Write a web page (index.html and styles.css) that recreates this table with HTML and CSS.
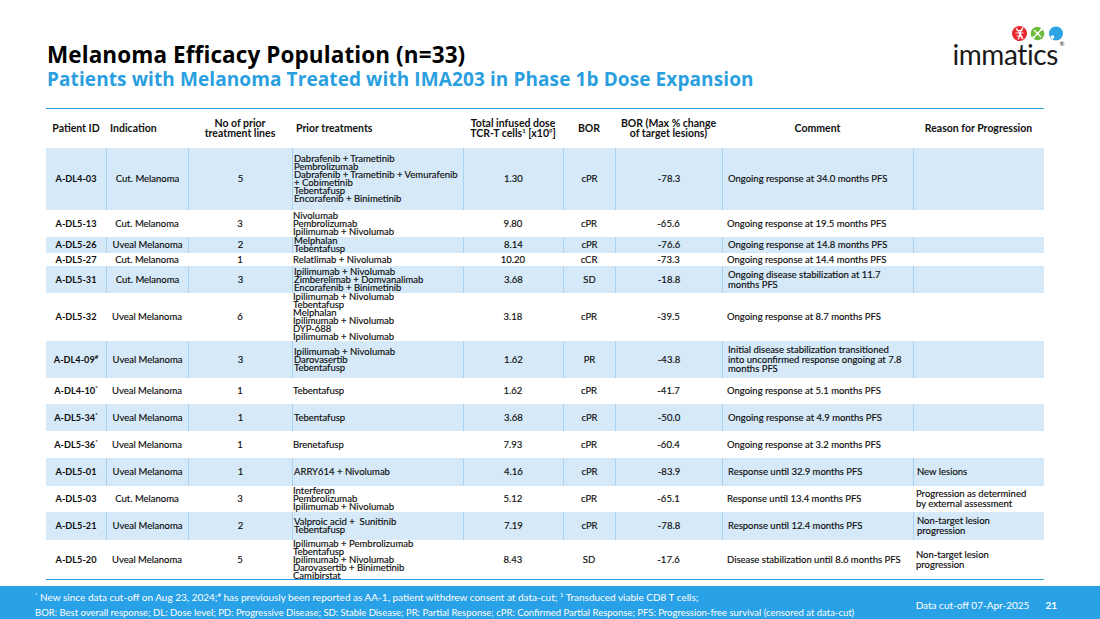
FILE: index.html
```html
<!DOCTYPE html>
<html>
<head>
<meta charset="utf-8">
<link rel="stylesheet" href="styles.css">
</head>
<body>
<div class="slide">
  <header class="top">
    <div class="titles">
      <h1 class="title">Melanoma Efficacy Population (n=33)</h1>
      <h2 class="subtitle">Patients with Melanoma Treated with IMA203 in Phase 1b Dose Expansion</h2>
    </div>
    <div class="logo">
      <svg class="dots" width="54" height="17" viewBox="0 0 54 17">
        <circle cx="7.5" cy="8.5" r="7.5" fill="#e8262d"/>
        <path d="M4 3.5 C8 6, 9 10, 6 14.5 M11 2.5 C8 6, 7 10, 11 14" stroke="#fff" stroke-width="1.3" fill="none"/>
        <path d="M3.5 8 L11.5 8 M4.5 11 L10.5 11 M4.5 5.5 L10.5 5.5" stroke="#fff" stroke-width="0.9" fill="none"/>
        <circle cx="25.5" cy="8.5" r="6.8" fill="#6dbb3b"/>
        <path d="M21.5 12.5 L29.5 4.5 M22 5 L29 12" stroke="#fff" stroke-width="1.2" fill="none"/>
        <circle cx="21.5" cy="12.5" r="1.3" fill="#fff"/>
        <circle cx="29.5" cy="4.5" r="1.3" fill="#fff"/>
        <circle cx="25.5" cy="8.5" r="1.4" fill="#fff"/>
        <circle cx="44" cy="8.5" r="7" fill="#2ba3e4"/>
        <circle cx="40.5" cy="12" r="1.8" fill="#fff"/>
      </svg>
      <div class="brand">immatics<span class="reg">®</span></div>
    </div>
  </header>

  <div class="table">
    <div class="row head">
      <div class="c"><span>Patient ID</span></div>
      <div class="c l"><span>Indication</span></div>
      <div class="c"><span>No of prior<br>treatment lines</span></div>
      <div class="c l"><span>Prior treatments</span></div>
      <div class="c"><span>Total infused dose<br>TCR-T cells<sup class="sup">1</sup> [x10<sup class="sup">9</sup>]</span></div>
      <div class="c"><span>BOR</span></div>
      <div class="c"><span>BOR (Max % change<br>of target lesions)</span></div>
      <div class="c"><span>Comment</span></div>
      <div class="c"><span>Reason for Progression</span></div>
    </div>

    <div class="row blue">
      <div class="c id"><span>A-DL4-03</span></div>
      <div class="c"><span>Cut. Melanoma</span></div>
      <div class="c"><span>5</span></div>
      <div class="c tx"><span>Dabrafenib + Trametinib<br>Pembrolizumab<br>Dabrafenib + Trametinib + Vemurafenib<br>+ Cobimetinib<br>Tebentafusp<br>Encorafenib + Binimetinib</span></div>
      <div class="c"><span>1.30</span></div>
      <div class="c"><span>cPR</span></div>
      <div class="c"><span>-78.3</span></div>
      <div class="c l"><span>Ongoing response at 34.0 months PFS</span></div>
      <div class="c r"></div>
    </div>

    <div class="row">
      <div class="c id"><span>A-DL5-13</span></div>
      <div class="c"><span>Cut. Melanoma</span></div>
      <div class="c"><span>3</span></div>
      <div class="c tx"><span>Nivolumab<br>Pembrolizumab<br>Ipilimumab + Nivolumab</span></div>
      <div class="c"><span>9.80</span></div>
      <div class="c"><span>cPR</span></div>
      <div class="c"><span>-65.6</span></div>
      <div class="c l"><span>Ongoing response at 19.5 months PFS</span></div>
      <div class="c r"></div>
    </div>

    <div class="row blue">
      <div class="c id"><span>A-DL5-26</span></div>
      <div class="c"><span>Uveal Melanoma</span></div>
      <div class="c"><span>2</span></div>
      <div class="c tx"><span>Melphalan<br>Tebentafusp</span></div>
      <div class="c"><span>8.14</span></div>
      <div class="c"><span>cPR</span></div>
      <div class="c"><span>-76.6</span></div>
      <div class="c l"><span>Ongoing response at 14.8 months PFS</span></div>
      <div class="c r"></div>
    </div>

    <div class="row">
      <div class="c id"><span>A-DL5-27</span></div>
      <div class="c"><span>Cut. Melanoma</span></div>
      <div class="c"><span>1</span></div>
      <div class="c tx"><span>Relatlimab + Nivolumab</span></div>
      <div class="c"><span>10.20</span></div>
      <div class="c"><span>cCR</span></div>
      <div class="c"><span>-73.3</span></div>
      <div class="c l"><span>Ongoing response at 14.4 months PFS</span></div>
      <div class="c r"></div>
    </div>

    <div class="row blue">
      <div class="c id"><span>A-DL5-31</span></div>
      <div class="c"><span>Cut. Melanoma</span></div>
      <div class="c"><span>3</span></div>
      <div class="c tx"><span>Ipilimumab + Nivolumab<br>Zimberelimab + Domvanalimab<br>Encorafenib + Binimetinib</span></div>
      <div class="c"><span>3.68</span></div>
      <div class="c"><span>SD</span></div>
      <div class="c"><span>-18.8</span></div>
      <div class="c l"><span>Ongoing disease stabilization at 11.7<br>months PFS</span></div>
      <div class="c r"></div>
    </div>

    <div class="row">
      <div class="c id"><span>A-DL5-32</span></div>
      <div class="c"><span>Uveal Melanoma</span></div>
      <div class="c"><span>6</span></div>
      <div class="c tx"><span>Ipilimumab + Nivolumab<br>Tebentafusp<br>Melphalan<br>Ipilimumab + Nivolumab<br>DYP-688<br>Ipilimumab + Nivolumab</span></div>
      <div class="c"><span>3.18</span></div>
      <div class="c"><span>cPR</span></div>
      <div class="c"><span>-39.5</span></div>
      <div class="c l"><span>Ongoing response at 8.7 months PFS</span></div>
      <div class="c r"></div>
    </div>

    <div class="row blue">
      <div class="c id"><span>A-DL4-09<sup class="sup">#</sup></span></div>
      <div class="c"><span>Uveal Melanoma</span></div>
      <div class="c"><span>3</span></div>
      <div class="c tx"><span>Ipilimumab + Nivolumab<br>Darovasertib<br>Tebentafusp</span></div>
      <div class="c"><span>1.62</span></div>
      <div class="c"><span>PR</span></div>
      <div class="c"><span>-43.8</span></div>
      <div class="c l"><span>Initial disease stabilization transitioned<br>into unconfirmed response ongoing at 7.8<br>months PFS</span></div>
      <div class="c r"></div>
    </div>

    <div class="row">
      <div class="c id"><span>A-DL4-10<sup class="sup">*</sup></span></div>
      <div class="c"><span>Uveal Melanoma</span></div>
      <div class="c"><span>1</span></div>
      <div class="c tx"><span>Tebentafusp</span></div>
      <div class="c"><span>1.62</span></div>
      <div class="c"><span>cPR</span></div>
      <div class="c"><span>-41.7</span></div>
      <div class="c l"><span>Ongoing response at 5.1 months PFS</span></div>
      <div class="c r"></div>
    </div>

    <div class="row blue">
      <div class="c id"><span>A-DL5-34<sup class="sup">*</sup></span></div>
      <div class="c"><span>Uveal Melanoma</span></div>
      <div class="c"><span>1</span></div>
      <div class="c tx"><span>Tebentafusp</span></div>
      <div class="c"><span>3.68</span></div>
      <div class="c"><span>cPR</span></div>
      <div class="c"><span>-50.0</span></div>
      <div class="c l"><span>Ongoing response at 4.9 months PFS</span></div>
      <div class="c r"></div>
    </div>

    <div class="row">
      <div class="c id"><span>A-DL5-36<sup class="sup">*</sup></span></div>
      <div class="c"><span>Uveal Melanoma</span></div>
      <div class="c"><span>1</span></div>
      <div class="c tx"><span>Brenetafusp</span></div>
      <div class="c"><span>7.93</span></div>
      <div class="c"><span>cPR</span></div>
      <div class="c"><span>-60.4</span></div>
      <div class="c l"><span>Ongoing response at 3.2 months PFS</span></div>
      <div class="c r"></div>
    </div>

    <div class="row blue">
      <div class="c id"><span>A-DL5-01</span></div>
      <div class="c"><span>Uveal Melanoma</span></div>
      <div class="c"><span>1</span></div>
      <div class="c tx"><span>ARRY614 + Nivolumab</span></div>
      <div class="c"><span>4.16</span></div>
      <div class="c"><span>cPR</span></div>
      <div class="c"><span>-83.9</span></div>
      <div class="c l"><span>Response until 32.9 months PFS</span></div>
      <div class="c r"><span>New lesions</span></div>
    </div>

    <div class="row">
      <div class="c id"><span>A-DL5-03</span></div>
      <div class="c"><span>Cut. Melanoma</span></div>
      <div class="c"><span>3</span></div>
      <div class="c tx"><span>Interferon<br>Pembrolizumab<br>Ipilimumab + Nivolumab</span></div>
      <div class="c"><span>5.12</span></div>
      <div class="c"><span>cPR</span></div>
      <div class="c"><span>-65.1</span></div>
      <div class="c l"><span>Response until 13.4 months PFS</span></div>
      <div class="c r"><span>Progression as determined<br>by external assessment</span></div>
    </div>

    <div class="row blue">
      <div class="c id"><span>A-DL5-21</span></div>
      <div class="c"><span>Uveal Melanoma</span></div>
      <div class="c"><span>2</span></div>
      <div class="c tx"><span>Valproic acid +&nbsp; Sunitinib<br>Tebentafusp</span></div>
      <div class="c"><span>7.19</span></div>
      <div class="c"><span>cPR</span></div>
      <div class="c"><span>-78.8</span></div>
      <div class="c l"><span>Response until 12.4 months PFS</span></div>
      <div class="c r"><span>Non-target lesion<br>progression</span></div>
    </div>

    <div class="row">
      <div class="c id"><span>A-DL5-20</span></div>
      <div class="c"><span>Uveal Melanoma</span></div>
      <div class="c"><span>5</span></div>
      <div class="c tx"><span>Ipilimumab + Pembrolizumab<br>Tebentafusp<br>Ipilimumab + Nivolumab<br>Darovasertib + Binimetinib<br>Camibirstat</span></div>
      <div class="c"><span>8.43</span></div>
      <div class="c"><span>SD</span></div>
      <div class="c"><span>-17.6</span></div>
      <div class="c l"><span>Disease stabilization until 8.6 months PFS</span></div>
      <div class="c r"><span>Non-target lesion<br>progression</span></div>
    </div>
  </div>

  <footer class="footer">
    <div class="notes">
      <p class="n1"><sup class="fsup">*</sup> New since data cut-off on Aug 23, 2024;<sup class="fsup">#</sup> has previously been reported as AA-1, patient withdrew consent at data-cut; <sup class="fsup">1</sup> Transduced viable CD8 T cells;</p>
      <p>BOR: Best overall response; DL: Dose level; PD: Progressive Disease; SD: Stable Disease; PR: Partial Response; cPR: Confirmed Partial Response; PFS: Progression-free survival (censored at data-cut)</p>
    </div>
    <div class="cut">Data cut-off 07-Apr-2025</div>
    <div class="page">21</div>
  </footer>
</div>
</body>
</html>
```
FILE: styles.css
```css
* { box-sizing: border-box; margin: 0; padding: 0; }

body {
  width: 1100px;
  height: 619px;
  overflow: hidden;
  background: #ffffff;
  font-family: Lato, "Liberation Sans", sans-serif;
  color: #0d0d0d;
}

.slide {
  width: 1100px;
  height: 619px;
  display: flex;
  flex-direction: column;
}

/* ---------- header ---------- */
.top {
  height: 108px;
  display: flex;
  justify-content: space-between;
  align-items: flex-start;
  padding: 25px 36px 0 47px;
}

.titles { margin-top: 17px; }

.title {
  font-family: "Open Sans", sans-serif;
  font-weight: 700;
  font-size: 22.5px;
  line-height: 25px;
  letter-spacing: 0.1px;
  color: #000;
}

.subtitle {
  font-family: "Open Sans", sans-serif;
  font-weight: 700;
  font-size: 19px;
  line-height: 24px;
  letter-spacing: 0.1px;
  color: #2a9fe0;
}

.logo {
  display: flex;
  flex-direction: column;
  align-items: flex-end;
  width: 116px;
}

.dots { display: block; margin-right: -2px; }

.brand {
  font-family: Lato, sans-serif;
  font-weight: 400;
  font-size: 28px;
  line-height: 24px;
  color: #1a1a1a;
  letter-spacing: -0.4px;
  position: relative;
  padding-right: 6px;
}

.reg {
  position: absolute;
  right: 0;
  top: -1px;
  font-size: 6px;
  line-height: 6px;
}

/* ---------- table ---------- */
.table {
  margin-left: 46px;
  width: 998px;
  border-top: 1px solid #2a9fe0;
  border-bottom: 1px solid #2a9fe0;
}

.row {
  display: grid;
  grid-template-columns: 60px 82px 104px 171px 100px 52px 107px 191px 131px;
  font-size: 9.5px;
  line-height: 9.5px;
  -webkit-text-stroke: 0.15px #0d0d0d;
}

.row.blue { background: #d5e9f8; }
.row.blue .c + .c { border-left: 1px solid #a9d2f0; }

.head {
  height: 39px;
  font-weight: 700;
  font-size: 10.5px;
  line-height: 9.5px;
  color: #111;
  -webkit-text-stroke: 0;
}

.row:nth-child(2)  { height: 62px; }
.row:nth-child(3)  { height: 27px; }
.row:nth-child(4)  { height: 16px; }
.row:nth-child(5)  { height: 13px; }
.row:nth-child(6)  { height: 27px; }
.row:nth-child(7)  { height: 48px; }
.row:nth-child(8)  { height: 37px; }
.row:nth-child(9)  { height: 26px; }
.row:nth-child(10) { height: 27px; }
.row:nth-child(11) { height: 27px; }
.row:nth-child(12) { height: 28px; }
.row:nth-child(13) { height: 26px; }
.row:nth-child(14) { height: 28px; }
.row:nth-child(15) { height: 39px; }

.c {
  display: flex;
  flex-direction: column;
  justify-content: center;
  align-items: center;
  text-align: center;
  white-space: nowrap;
  min-height: 0;
  overflow: visible;
}

.c.l { align-items: flex-start; text-align: left; padding-left: 5px; }
.c.r { align-items: flex-start; text-align: left; padding-left: 3px; line-height: 10px; }
.c.tx { align-items: flex-start; text-align: left; padding-left: 1px; line-height: 8px; }
.head .c.l { padding-left: 4px; }

.id { font-weight: 700; font-size: 9.2px; -webkit-text-stroke: 0; }

.sup {
  font-size: 6px;
  line-height: 0;
  vertical-align: 4px;
}

/* ---------- footer ---------- */
.footer {
  margin-top: auto;
  height: 33px;
  background: #29a1e6;
  color: #ffffff;
  display: flex;
  align-items: center;
  padding-left: 35px;
  padding-right: 43px;
  padding-top: 4px;
}

.notes {
  flex: 1;
  font-size: 9.5px;
  line-height: 15px;
  white-space: nowrap;
}

.n1 { font-size: 10px; }

.fsup {
  font-size: 6px;
  line-height: 0;
  vertical-align: 4px;
}

.cut {
  font-size: 10px;
  margin-right: 16px;
}

.page {
  font-size: 10px;
  font-weight: 700;
}
```
